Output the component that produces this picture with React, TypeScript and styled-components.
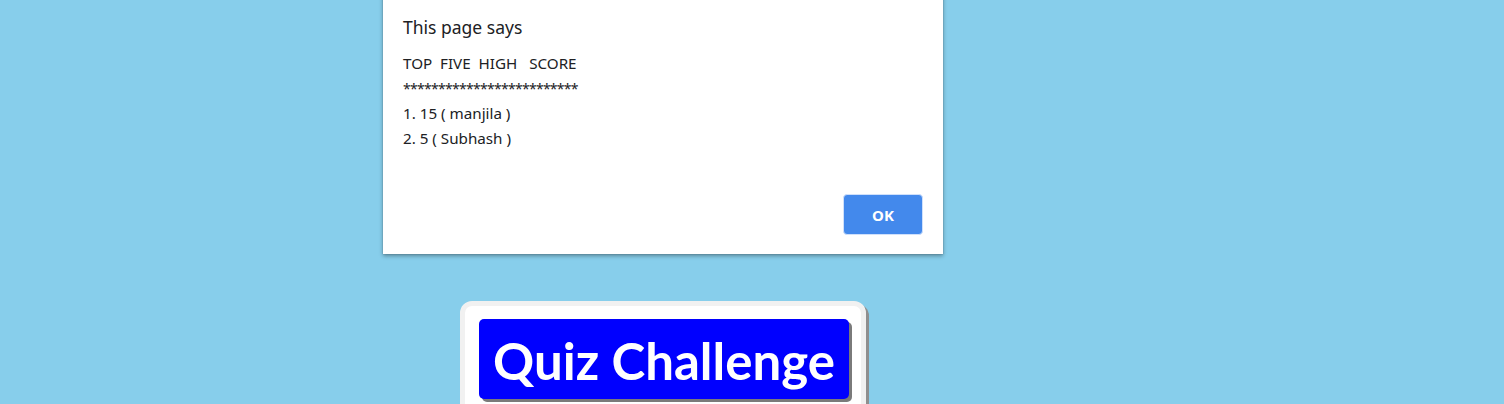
import React from "react";
import styled, { createGlobalStyle } from "styled-components";

const Global = createGlobalStyle`
  html, body { margin: 0; padding: 0; }
  body {
    background: #87ceeb;
    width: 1504px;
    height: 404px;
    overflow: hidden;
    font-family: "Noto Sans", "Open Sans", sans-serif;
  }
`;

const Page = styled.div`
  position: relative;
  width: 1504px;
  height: 404px;
  padding: 301px 0 0 460px;
  box-sizing: border-box;
`;

const Card = styled.div`
  width: 406px;
  box-sizing: border-box;
  background: #ffffff;
  border: 5px solid #f1f1f1;
  border-radius: 12px;
  box-shadow: 3px 3px 0 #8f8f8f;
  padding: 13px 12px 20px 14px;
`;

const Title = styled.h1`
  margin: 0;
  height: 80px;
  background: #0000ff;
  border-radius: 5px;
  box-shadow: 3px 3px 0 #7a7a7a;
  color: #ffffff;
  font-family: Lato, "Open Sans", sans-serif;
  font-weight: 700;
  font-size: 51px;
  display: flex;
  align-items: center;
  justify-content: center;
  padding-top: 2px;
  box-sizing: border-box;
`;

const Dialog = styled.div`
  position: absolute;
  left: 383px;
  top: -10px;
  width: 560px;
  height: 264px;
  background: #ffffff;
  box-shadow: 0 2px 4px rgba(0, 0, 0, 0.35), 0 0 1px rgba(0, 0, 0, 0.3);
  box-sizing: border-box;
  padding: 25px 20px 0 20px;
  display: flex;
  flex-direction: column;
  color: #202124;
`;

const DialogTitle = styled.div`
  font-size: 17.5px;
  line-height: 24px;
  margin-bottom: 12px;
`;

const Message = styled.div`
  white-space: pre;
  font-size: 15.2px;
  line-height: 25px;
`;

const Stars = styled.span`
  letter-spacing: -0.72px;
  font-size: 14px;
`;

const Footer = styled.div`
  margin-top: auto;
  display: flex;
  justify-content: flex-end;
  padding-bottom: 19px;
`;

const OkButton = styled.button`
  width: 80px;
  height: 41px;
  border: 1px solid #cfe0fb;
  border-radius: 4px;
  background: #4389ec;
  color: #ffffff;
  font-family: "Noto Sans", sans-serif;
  font-weight: bold;
  font-size: 15px;
  padding: 0;
`;

export default function App() {
  return (
    <>
      <Global />
      <Page>
        <Card>
          <Title>Quiz Challenge</Title>
        </Card>
        <Dialog>
          <DialogTitle>This page says</DialogTitle>
          <Message>
            {"TOP  FIVE  HIGH   SCORE\n"}
            <Stars>*************************</Stars>
            {"\n1. 15 ( manjila )\n2. 5 ( Subhash )"}
          </Message>
          <Footer>
            <OkButton>OK</OkButton>
          </Footer>
        </Dialog>
      </Page>
    </>
  );
}
